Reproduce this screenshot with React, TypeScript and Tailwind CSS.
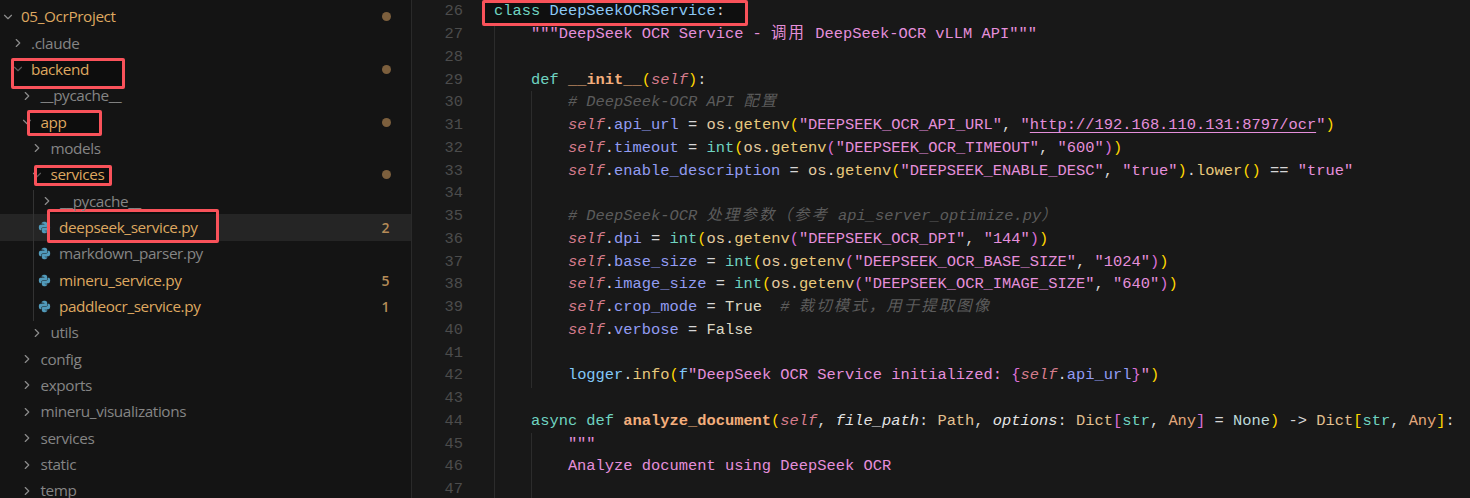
import React from "react";
import { ChevronRight, ChevronDown } from "lucide-react";
import { FaPython } from "react-icons/fa";

const KW = "text-[#6fd3c0]";
const CLS = "text-[#8cc8f5]";
const STR = "text-[#e58fdb]";
const SELF = "italic text-[#d57c8c]";
const ATTR = "text-[#929cf2]";
const OP = "text-[#d6d6d6]";
const MOD = "text-[#e3cba2]";
const FN = "text-[#e8c97c]";
const BI = "text-[#6fd3c0]";
const BOLD = "font-bold text-[#f3ae7c]";
const COM = "italic text-[#5c5c5c]";
const G = "text-[#ffd700]";
const P = "text-[#da70d6]";
const LOG = "text-[#82c8f8]";
const CONST = "text-[#dcd8c4]";
const PARAM = "italic text-[#e4e4e4]";
const TY = "text-[#e3c090]";
const ANY = "text-[#e3a87c]";
const NONE = "text-[#bcd8d8]";
const CJK = "tracking-[2.1px]";

type T = [string, string];

const self: T = ["self", SELF];

const envInt = (pre: T[], name: string, val: string): T[] => [
  ...pre,
  [" = ", OP],
  ["int", BI],
  ["(", G],
  ["os", MOD],
  [".", OP],
  ["getenv", FN],
  ["(", P],
  [`"${name}"`, STR],
  [", ", OP],
  [`"${val}"`, STR],
  [")", P],
  [")", G],
];

const lines: T[][] = [
  [["class ", KW], ["DeepSeekOCRService", CLS], [":", OP]],
  [["    \"\"\"DeepSeek OCR Service - ", STR], ["调用", `${STR} ${CJK}`], [" DeepSeek-OCR vLLM API\"\"\"", STR]],
  [],
  [["    ", OP], ["def ", KW], ["__init__", BOLD], ["(", G], self, [")", G], [":", OP]],
  [["        # DeepSeek-OCR API ", COM], ["配置", `${COM} ${CJK}`]],
  [
    ["        ", OP], self, [".", OP], ["api_url", ATTR], [" = ", OP], ["os", MOD], [".", OP], ["getenv", FN], ["(", G],
    ["\"DEEPSEEK_OCR_API_URL\"", STR], [", ", OP], ["\"", STR], ["http://192.168.110.131:8797/ocr", `${STR} underline underline-offset-[3px]`], ["\"", STR], [")", G],
  ],
  envInt([["        ", OP], self, [".", OP], ["timeout", ATTR]], "DEEPSEEK_OCR_TIMEOUT", "600"),
  [
    ["        ", OP], self, [".", OP], ["enable_description", ATTR], [" = ", OP], ["os", MOD], [".", OP], ["getenv", FN], ["(", G],
    ["\"DEEPSEEK_ENABLE_DESC\"", STR], [", ", OP], ["\"true\"", STR], [")", G], [".", OP], ["lower", FN], ["()", G], [" == ", OP], ["\"true\"", STR],
  ],
  [],
  [["        # DeepSeek-OCR ", COM], ["处理参数（参考", `${COM} ${CJK}`], [" api_server_optimize.py", COM], ["）", `${COM} ${CJK}`]],
  envInt([["        ", OP], self, [".", OP], ["dpi", ATTR]], "DEEPSEEK_OCR_DPI", "144"),
  envInt([["        ", OP], self, [".", OP], ["base_size", ATTR]], "DEEPSEEK_OCR_BASE_SIZE", "1024"),
  envInt([["        ", OP], self, [".", OP], ["image_size", ATTR]], "DEEPSEEK_OCR_IMAGE_SIZE", "640"),
  [["        ", OP], self, [".", OP], ["crop_mode", ATTR], [" = ", OP], ["True", CONST], ["  # ", COM], ["裁切模式，用于提取图像", `${COM} ${CJK}`]],
  [["        ", OP], self, [".", OP], ["verbose", ATTR], [" = ", OP], ["False", CONST]],
  [],
  [
    ["        ", OP], ["logger", LOG], [".", OP], ["info", FN], ["(", G], ["f", LOG], ["\"DeepSeek OCR Service initialized: ", STR],
    ["{", P], self, [".", OP], ["api_url", ATTR], ["}", P], ["\"", STR], [")", G],
  ],
  [],
  [
    ["    ", OP], ["async def ", KW], ["analyze_document", BOLD], ["(", G], self, [", ", OP], ["file_path", PARAM], [": ", OP], ["Path", TY], [", ", OP],
    ["options", PARAM], [": ", OP], ["Dict", TY], ["[", P], ["str", BI], [", ", OP], ["Any", ANY], ["]", P], [" = ", OP], ["None", NONE], [")", G], [" -> ", OP],
    ["Dict", TY], ["[", G], ["str", BI], [", ", OP], ["Any", ANY], ["]", G], [":", OP],
  ],
  [["        \"\"\"", STR]],
  [["        Analyze document using DeepSeek OCR", STR]],
  [],
];

type Row = {
  name: string;
  pad: string;
  kind: "open" | "closed" | "file";
  mod?: boolean;
  badge?: string;
  dot?: boolean;
  active?: boolean;
};

const L0 = "pl-[0.5px]";
const L1 = "pl-[10.5px]";
const L2 = "pl-[20px]";
const L3 = "pl-[30px]";
const L4 = "pl-[39.5px]";
const LF = "pl-[38px]";

const rows: Row[] = [
  { name: "05_OcrProject", pad: L0, kind: "open", mod: true, dot: true },
  { name: ".claude", pad: L1, kind: "closed" },
  { name: "backend", pad: L1, kind: "open", mod: true, dot: true },
  { name: "__pycache__", pad: L2, kind: "closed" },
  { name: "app", pad: L2, kind: "open", mod: true, dot: true },
  { name: "models", pad: L3, kind: "closed" },
  { name: "services", pad: L3, kind: "open", mod: true, dot: true },
  { name: "__pycache__", pad: L4, kind: "closed" },
  { name: "deepseek_service.py", pad: LF, kind: "file", mod: true, badge: "2", active: true },
  { name: "markdown_parser.py", pad: LF, kind: "file" },
  { name: "mineru_service.py", pad: LF, kind: "file", mod: true, badge: "5" },
  { name: "paddleocr_service.py", pad: LF, kind: "file", mod: true, badge: "1" },
  { name: "utils", pad: L3, kind: "closed" },
  { name: "config", pad: L2, kind: "closed" },
  { name: "exports", pad: L2, kind: "closed" },
  { name: "mineru_visualizations", pad: L2, kind: "closed" },
  { name: "services", pad: L2, kind: "closed" },
  { name: "static", pad: L2, kind: "closed" },
  { name: "temp", pad: L2, kind: "closed" },
];

function TreeRow({ r }: { r: Row }) {
  return (
    <div
      className={`flex h-[26.35px] shrink-0 items-center pr-[22px] ${r.pad} ${r.active ? "bg-[#252525]" : ""}`}
    >
      {r.kind === "file" ? (
        <FaPython className="mr-[8px] h-[13px] w-[13px] shrink-0 text-[#519aba]" />
      ) : r.kind === "open" ? (
        <ChevronDown className="mr-[6.5px] h-[14px] w-[14px] shrink-0 text-[#8c8c8c]" strokeWidth={2} />
      ) : (
        <ChevronRight className="mr-[6.5px] h-[14px] w-[14px] shrink-0 text-[#8c8c8c]" strokeWidth={2} />
      )}
      <span className={`relative z-10 flex-1 whitespace-pre ${r.mod ? "text-[#dfa860]" : "text-[#858585]"}`}>{r.name}</span>
      {r.dot && <span className="mr-[-2px] h-[9px] w-[9px] rounded-full bg-[#7c5f3d]" />}
      {r.badge && <span className="text-[14px] font-semibold text-[#b58c58]">{r.badge}</span>}
    </div>
  );
}

const Box = ({ cls }: { cls: string }) => (
  <div className={`pointer-events-none absolute rounded-[2px] border-[3px] border-[#f9525a] bg-black/35 ${cls}`} />
);

export default function App() {
  return (
    <div className="relative flex h-[498px] w-[1470px] overflow-hidden bg-[#181818]">
      <aside
        className="flex w-[411px] shrink-0 flex-col overflow-hidden bg-[#141414] pt-[3.5px] text-[15.3px] font-['Open_Sans','Noto_Sans',sans-serif] tracking-[-0.38px]"
      >
        {rows.map((r, i) => (
          <TreeRow key={i} r={r} />
        ))}
      </aside>
      <div className="w-px shrink-0 bg-[#2a2a2a]" />
      <main className="flex min-w-0 flex-1 font-['Liberation_Mono','Noto_Sans_CJK_SC',monospace] text-[15.4px] leading-[22.75px]">
        <div className="mt-[0.4px] w-[51px] shrink-0 text-right text-[#4c4c4c]">
          {lines.map((_, i) => (
            <div key={i} className="h-[22.75px]">{26 + i}</div>
          ))}
        </div>
        <div className="ml-[31px] mt-[0.4px] min-w-0 flex-1">
          {lines.map((l, i) => (
            <div key={i} className="relative z-10 h-[22.75px] whitespace-pre">
              {l.map(([t, c], j) => (
                <span key={j} className={c}>{t}</span>
              ))}
            </div>
          ))}
        </div>
      </main>

      {/* tree indent guide */}
      <div className="absolute left-[33px] top-[190px] h-[131px] w-px bg-[#333333]" />
      {/* editor indent guides */}
      <div className="absolute left-[494px] top-[23px] h-[475px] w-px bg-[#2c2c2c]" />
      <div className="absolute left-[531px] top-[91px] h-[297px] w-px bg-[#2c2c2c]" />
      <div className="absolute left-[531px] top-[433px] h-[65px] w-px bg-[#2c2c2c]" />

      {/* red annotation boxes */}
      <Box cls="left-[11px] top-[58px] h-[31px] w-[114px]" />
      <Box cls="left-[27px] top-[110px] h-[26px] w-[75px]" />
      <Box cls="left-[34px] top-[165px] h-[21px] w-[78px]" />
      <Box cls="left-[47px] top-[209px] h-[34px] w-[172px]" />
      <Box cls="left-[482px] top-0 h-[26px] w-[266px]" />
    </div>
  );
}
